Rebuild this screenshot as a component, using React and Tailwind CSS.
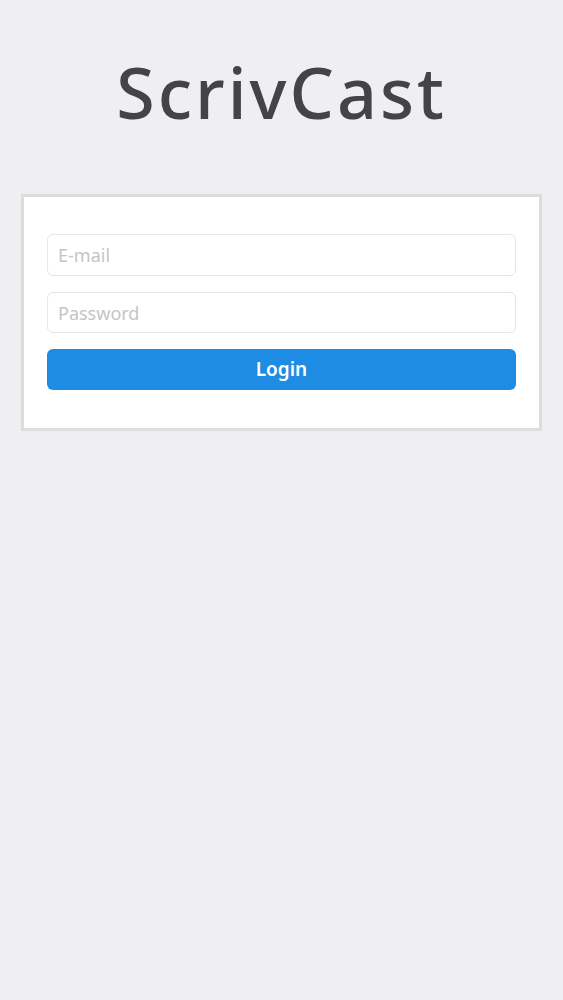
export default function App() {
  return (
    <div className="min-h-screen bg-[#efeef1] pt-[52px]" style={{ fontFamily: "'Noto Sans', 'Open Sans', sans-serif" }}>
      <h1 className="text-center text-[70px] leading-[80px] font-medium text-[#444446] tracking-[3px]">ScrivCast</h1>

      <div className="mx-[21px] mt-[62px] border-[3px] border-[#dddcdf] bg-white px-[23px] pt-[37px] pb-[38px]">
        <form className="flex flex-col gap-[16px]" onSubmit={(e) => e.preventDefault()}>
          <input
            type="email"
            placeholder="E-mail"
            className="h-[42px] w-full rounded-[6px] border border-[#e6e6e8] px-[10px] text-[18px] text-[#333] placeholder-[#c5c4c9] outline-none"
          />
          <input
            type="password"
            placeholder="Password"
            className="h-[41px] w-full rounded-[6px] border border-[#e6e6e8] px-[10px] text-[18px] text-[#333] placeholder-[#c5c4c9] outline-none"
          />
          <button
            type="submit"
            className="h-[41px] w-full rounded-[6px] bg-[#1e8ce3] text-[19px] font-semibold text-white"
          >
            Login
          </button>
        </form>
      </div>
    </div>
  )
}
